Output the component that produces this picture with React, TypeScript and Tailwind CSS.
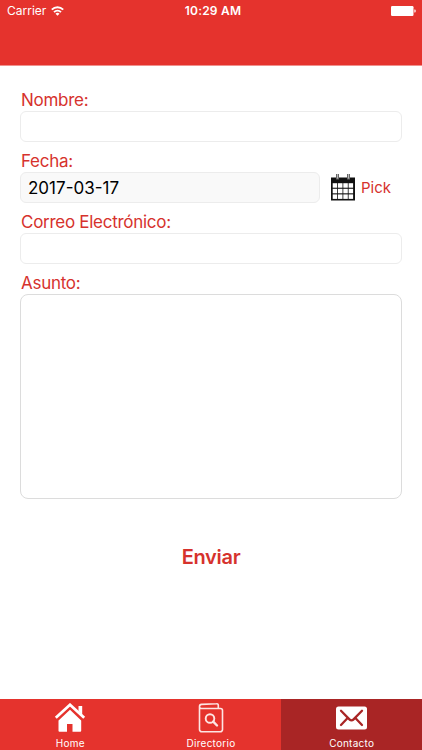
import type { ReactNode } from 'react'

type TabName = 'Home' | 'Directorio' | 'Contacto'

function StatusBar() {
  return (
    <div className="grid h-[22px] grid-cols-3 items-center pr-1.5 pl-[7px] text-white">
      <div className="flex items-center gap-[5px]">
        <span className="text-[12px] leading-none">Carrier</span>
        <svg width="13" height="10" viewBox="0 0 13 10" fill="none" stroke="currentColor" strokeWidth="1.9">
          <path d="M.8 3.6a8.2 8.2 0 0 1 11.4 0" />
          <path d="M3 6.1a5.1 5.1 0 0 1 7 0" />
          <path d="M6.5 9.8 4.500 7.700a2.8 2.8 0 0 1 4 0Z" fill="currentColor" stroke="none" />
        </svg>
      </div>
      <span className="pl-[3px] text-center text-[12px] leading-none font-semibold tracking-[0.2px]">10:29 AM</span>
      <svg className="ml-auto" width="25" height="10" viewBox="0 0 25 10" fill="currentColor">
        <rect width="22.5" height="10" rx="1.2" />
        <path d="M23.2 3.4h.6a1 1 0 0 1 1 1v1.2a1 1 0 0 1-1 1h-.6Z" opacity=".8" />
      </svg>
    </div>
  )
}

function CalendarIcon() {
  return (
    <svg width="24" height="27" viewBox="0 0 24 27">
      <path d="M0 3.5h24V26.5H0Z" fill="#111" />
      <path d="M5 0h3v5.500H5ZM16 0h3v5.500h-3Z" fill="#666" />
      <path d="M6 0h1v4.500H6ZM17 0h1v4.500h-1Z" fill="#bbb" />
      {[9.2, 14.8, 20.4].map((y) =>
        [1.7, 7, 12.3, 17.6].map((x) => (
          <rect key={`${x}-${y}`} x={x} y={y} width="4.5" height="4.5" fill="#fff" />
        )),
      )}
    </svg>
  )
}

function HomeIcon() {
  return (
    <svg width="32" height="30" viewBox="0 0 32 30">
      <path d="M24.500 3h3.700v9l-3.700-4Z" fill="#fff" />
      <path d="M16 6.800 4.500 17.500V27.700a1 1 0 0 0 1 1h7.500v-7.700h5.500v7.700h7.700a1 1 0 0 0 1-1V17.500Z" fill="#fff" />
      <path d="M1.800 14.800 16 1.800l14.200 13" fill="none" stroke="#fff" strokeWidth="2.8" />
      <path d="M4 16 16 5l12 11" fill="none" stroke="#e5332d" strokeWidth=".8" />
    </svg>
  )
}

function DirectoryIcon() {
  return (
    <svg width="26" height="30" viewBox="0 0 26 30" fill="none" stroke="#fde5e3" strokeWidth="1.6" strokeLinejoin="round">
      <path d="M1.5 3.500v23a2.300 2.300 0 0 0 2.300 2.300h18.400a2.300 2.300 0 0 0 2.300-2.300V7.500a2 2 0 0 0-2-2h-19a2 2 0 0 1-2-2c0-1.4.8-2 2-2.100L18.500.8c1.200-.1 1.800.5 1.800 1.500v3.200" />
      <circle cx="12" cy="15.500" r="4.300" strokeWidth="1.9" />
      <path d="m15.200 18.700 3.800 3.800" strokeWidth="2.4" strokeLinecap="round" />
    </svg>
  )
}

function MailIcon() {
  return (
    <svg width="31" height="30" viewBox="0 0 31 30">
      <rect y="3.5" width="31" height="23" rx="2.500" fill="#fff" />
      <g fill="none" stroke="#a92525" strokeWidth="2.3" strokeLinecap="round" strokeLinejoin="round">
        <path d="m5 7.800 8.700 8.800a2.500 2.500 0 0 0 3.600 0L26 7.800" />
        <path d="m5 22 6.400-6.700M26 22l-6.400-6.700" />
      </g>
    </svg>
  )
}

const TABS: { name: TabName; icon: ReactNode }[] = [
  { name: 'Home', icon: <HomeIcon /> },
  { name: 'Directorio', icon: <DirectoryIcon /> },
  { name: 'Contacto', icon: <MailIcon /> },
]

const LABEL = 'block h-[30px] pt-[8px] pl-px text-[17px] leading-[22px] tracking-[-0.28px] text-[#d6322d]'
const INPUT = 'block h-[31px] w-full rounded-[6px] border border-[#ececec] px-[7px] text-[17px] outline-none'

export default function App() {
  const active: TabName = 'Contacto'

  return (
    <div className="flex h-[750px] w-[422px] flex-col overflow-hidden bg-white font-['Inter',sans-serif]">
      <header className="h-[66px] shrink-0 border-b border-[#f0918d] bg-[#e5332d]">
        <StatusBar />
      </header>

      <main className="flex flex-1 flex-col px-5 pt-[15px]">
        <div>
          <label htmlFor="nombre" className={LABEL}>Nombre:</label>
          <input id="nombre" className={INPUT} />
        </div>

        <div>
          <label htmlFor="fecha" className={LABEL}>Fecha:</label>
          <div className="flex h-[31px] items-center">
            <div className="w-[300px]">
              <input id="fecha" readOnly value="2017-03-17" className={`${INPUT} bg-[#f9f9f9] text-black`} />
            </div>
            <button className="ml-[11px] flex items-center gap-1.5 text-[15px] text-[#d6322d]">
              <CalendarIcon />
              <span className="pt-0.5">Pick</span>
            </button>
          </div>
        </div>

        <div>
          <label htmlFor="correo" className={LABEL}>Correo Electrónico:</label>
          <input id="correo" className={INPUT} />
        </div>

        <div>
          <label htmlFor="asunto" className={LABEL}>Asunto:</label>
          <textarea id="asunto" className="block h-[205px] w-full resize-none rounded-[8px] border border-[#dcdcdc] p-2 outline-none" />
        </div>

        <button className="mx-auto mt-[45px] text-[20px] leading-[26px] font-semibold tracking-[-0.3px] text-[#d6322d]">Enviar</button>
      </main>

      <nav className="grid h-[51px] shrink-0 grid-cols-3">
        {TABS.map((tab) => (
          <button
            key={tab.name}
            className={`flex flex-col items-center pt-1 text-white ${tab.name === active ? 'bg-[#a92525]' : 'bg-[#e5332d]'}`}
          >
            {tab.icon}
            <span className="mt-1 text-[10px] leading-[12px] tracking-[0.25px]">{tab.name}</span>
          </button>
        ))}
      </nav>
    </div>
  )
}
